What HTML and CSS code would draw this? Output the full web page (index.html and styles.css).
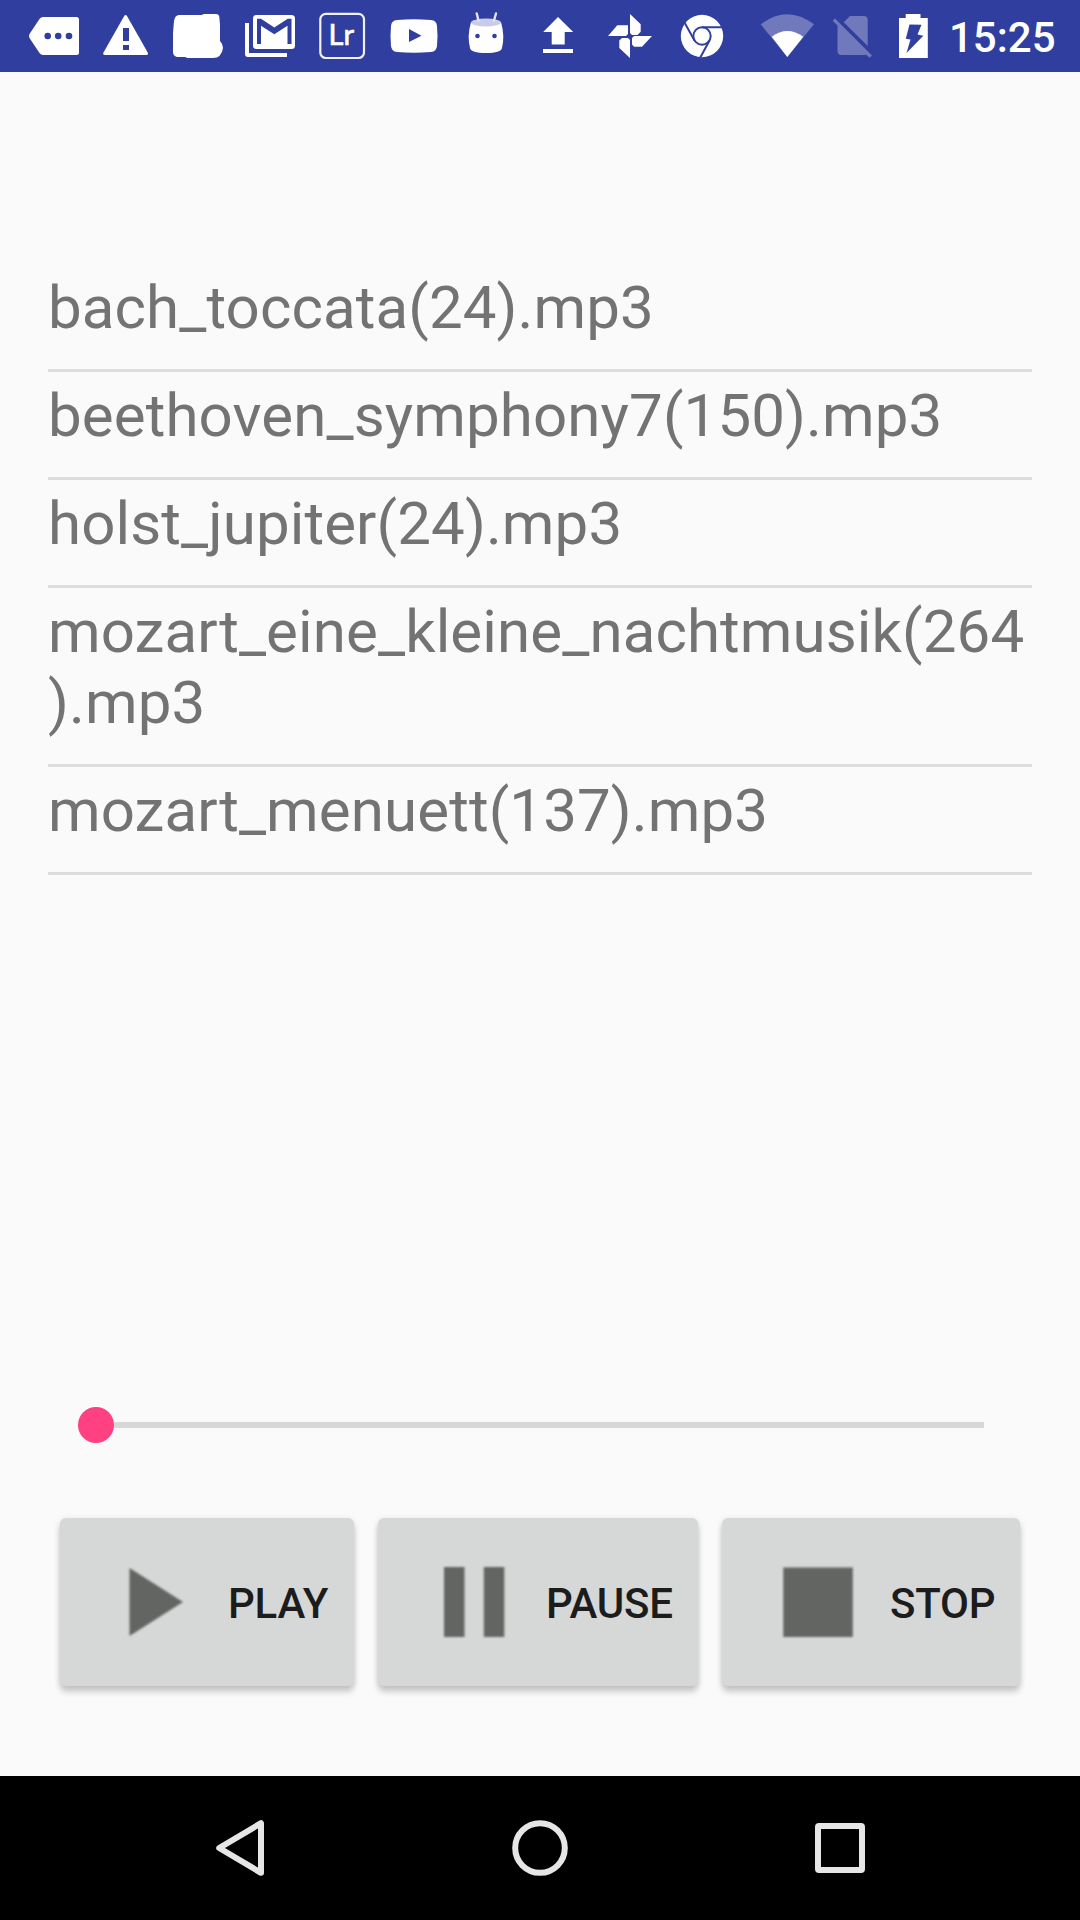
FILE: index.html
```html
<!DOCTYPE html>
<html lang="en">
<head>
<meta charset="utf-8">
<title>Music player</title>
<link rel="stylesheet" href="styles.css">
</head>
<body>
<div class="screen">
  <header class="status-bar">
    <div class="notifications">
      <svg class="icon" viewBox="18 0 72 72"><path d="M43 17H76.500q2.500 0 2.500 2.500v33q0 2.500-2.500 2.500H43q-2 0-3.500-2L29.500 38q-1-2 0-4L39.500 19q1.500-2 3.500-2z"/><g class="cut"><circle cx="47.700" cy="36" r="3.300"/><circle cx="58.200" cy="36" r="3.300"/><circle cx="69" cy="36" r="3.300"/></g></svg>
      <svg class="icon" viewBox="90 0 72 72"><path d="M124.200 16q1.400-1.800 2.800 0L147.700 52.500q1 2.500-1.500 2.500H105q-2.500 0-1.500-2.500z"/><path class="cut" d="M123 28h6v13h-6zM123 45h6v5h-6z"/></svg>
      <svg class="icon" viewBox="162 0 72 72"><path d="M179 15h22.500q2-1 3-1H216q3 0 3.300 3l.7 8v16q3 3 3 7-1.500 10-10 10H187q-1-1-2-1h-8q-4-1-4-5V33l1-12q1-6 5-6z"/></svg>
      <svg class="icon" viewBox="234 0 72 72"><path d="M245 23h4v30h38v4h-39q-3 0-3-3z"/><rect x="253" y="15" width="42" height="34" rx="3.500"/><path class="cut" d="M257 18.700h4l13.300 8.800 13.400-8.800h3.800V44h-4V25.800l-13.200 8.400L261 25.800V44h-4z"/></svg>
      <svg class="icon" viewBox="306 0 72 72"><rect class="frame" x="320.300" y="13.800" width="43.700" height="44.200" rx="5.500"/><text class="frame-label" x="328.500" y="45.200">Lr</text></svg>
      <svg class="icon" viewBox="378 0 72 72"><path d="M397 20q17-1.500 34 0 5.500.5 6 6 1 10 0 20-.5 5.500-6 6-17 1.300-34 0-5.500-.5-6-6-1-10 0-20 .5-5.500 6-6z"/><path class="cut" d="M409 29l12.500 6.700L409 42z"/></svg>
      <svg class="icon" viewBox="450 0 72 72"><path d="M471 22h30q4 14 1 26-1 5-16 5t-16-5q-3-12 1-26z"/><ellipse class="lid" cx="486" cy="22.500" rx="15" ry="4"/><path class="antenna" d="M476.700 13.500l1.800 7M496 13.500l-2 7"/><g class="cut"><circle cx="477.500" cy="36" r="2.300"/><circle cx="494.500" cy="36" r="2.300"/></g></svg>
      <svg class="icon" viewBox="522 0 72 72"><path d="M558 17l15.200 15h-8.500v12.500h-13V32h-8.500zM543 49h30v4h-30z"/></svg>
      <svg class="icon" viewBox="594 0 72 72"><path d="M630 14l10.700 10.300v7.500L637.500 35H632l-2-2zM608 36l9.300-10.700H628V34l-2 2zM652 36l-10 10.700h-8l-2-2.200V38l2-2zM630 58l-10.700-10v-7.500l2.700-2.500h6l2 2z"/></svg>
      <svg class="icon" viewBox="666 0 72 72"><circle cx="702" cy="36" r="21.200"/><g class="cut-line"><circle cx="702" cy="36" r="8.700"/><path d="M702 27.300h21M709.500 40.500L700.300 57.500M694.500 40.500L684.500 22.500"/></g></svg>
    </div>
    <div class="system">
      <svg class="icon wifi" viewBox="757 0 60 72"><path class="dim" d="M760.700 24.300Q787.300 4 814 24.300L787.300 57z"/><path d="M771.700 36.700q15.600-11.400 31.600 0L787.300 57z"/></svg>
      <svg class="icon sim" viewBox="829 0 47 72"><path class="dim" d="M835 18.500l37 37-2.500 2.300L866 54.500q-1 .5-2 .5h-22.500q-4 0-4-4V25.500l-4.800-4.800zM843.700 22.300l6.300-6.300h13.700q4 0 4 4v26z"/></svg>
      <svg class="icon battery" viewBox="893 0 41 72"><path d="M905.700 14h14.800v4h7.300v40H899V18h6.700z"/><path class="cut" d="M909.500 24.500l12 .3-4 9.700 5.800 1.200L906.500 53l4-13.500-4.700-.7z"/></svg>
      <time class="clock">15:25</time>
    </div>
  </header>

  <main class="player">
    <ul class="tracks">
      <li class="track">bach_toccata(24).mp3</li>
      <li class="track">beethoven_symphony7(150).mp3</li>
      <li class="track">holst_jupiter(24).mp3</li>
      <li class="track">mozart_eine_kleine_nachtmusik(264).mp3</li>
      <li class="track">mozart_menuett(137).mp3</li>
    </ul>
    <div class="seek"><span class="thumb"></span><span class="rail"></span></div>
    <div class="controls">
      <button class="control play"><svg class="glyph" viewBox="0 0 168 168"><path d="M69.500 50L123 84 69.500 118z"/></svg><span class="label">PLAY</span></button>
      <button class="control pause"><svg class="glyph" viewBox="0 0 168 168"><path d="M66 49h20.500v70H66zM105.800 49h20.500v70h-20.500z"/></svg><span class="label">PAUSE</span></button>
      <button class="control stop"><svg class="glyph" viewBox="0 0 168 168"><path d="M61.300 49.500h69.500V119H61.300z"/></svg><span class="label">STOP</span></button>
    </div>
  </main>

  <nav class="nav-bar">
    <svg class="nav-icon" viewBox="0 0 72 72"><path d="M57 11.200v49.600L15.200 36z"/></svg>
    <svg class="nav-icon" viewBox="0 0 72 72"><circle cx="36" cy="36" r="24.800"/></svg>
    <svg class="nav-icon" viewBox="0 0 72 72"><rect x="14" y="14" width="44" height="44" rx="1"/></svg>
  </nav>
</div>
</body>
</html>
```
FILE: styles.css
```css
* {
  box-sizing: border-box;
}

body {
  margin: 0;
  font-family: Roboto, "Liberation Sans", sans-serif;
}

.screen {
  display: flex;
  flex-direction: column;
  width: 1080px;
  height: 1920px;
  background: #fafafa;
}

.status-bar {
  display: flex;
  justify-content: space-between;
  height: 72px;
  padding-left: 18px;
  background: #303f9f;
}

.notifications,
.system {
  display: flex;
}

.icon {
  width: 72px;
  height: 72px;
  fill: #fff;
}

.cut {
  fill: #303f9f;
}

.cut-line {
  fill: none;
  stroke: #303f9f;
  stroke-width: 2;
}

.frame {
  fill: none;
  stroke: #f0f1f9;
  stroke-width: 2.2;
}

.frame-label {
  font: 400 29px Lato, sans-serif;
  stroke: #fff;
  stroke-width: 0.7;
}

.lid {
  fill: #c8cce6;
}

.antenna {
  stroke: #e3e5f3;
  stroke-width: 2.4;
  stroke-linecap: round;
}

.dim {
  fill: #7079bc;
}

.wifi {
  width: 60px;
}

.sim {
  width: 47px;
  margin-left: 12px;
}

.battery {
  width: 41px;
  margin-left: 17px;
}

.clock {
  width: 146px;
  padding-left: 15px;
  color: #fff;
  font-size: 42px;
  font-weight: 500;
  line-height: 76px;
}

.player {
  display: flex;
  flex: 1;
  flex-direction: column;
  padding: 192px 48px 0;
}

.tracks {
  height: 1125px;
  margin: 0;
  padding: 0;
  list-style: none;
}

.track {
  padding: 8px 0 26px;
  border-bottom: 3px solid #dcdcdc;
  color: #737373;
  font-size: 60px;
  letter-spacing: 0.12px;
  line-height: 71px;
  overflow-wrap: anywhere;
}

.seek {
  display: flex;
  align-items: center;
  height: 72px;
  padding: 0 48px 0 30px;
}

.thumb {
  width: 36px;
  height: 36px;
  border-radius: 50%;
  background: #ff4081;
}

.rail {
  flex: 1;
  height: 6px;
  background: #d7d7d7;
}

.controls {
  display: flex;
  gap: 24px;
  padding: 57px 12px 0;
}

.control {
  display: flex;
  align-items: center;
  height: 168px;
  padding: 0;
  border: 0;
  border-radius: 6px;
  background: #d6d8d7;
  box-shadow: 0 6px 6px rgba(0, 0, 0, 0.18), 0 1px 6px rgba(0, 0, 0, 0.1);
  color: #1c1c1c;
  font: 500 42px Roboto, "Liberation Sans", sans-serif;
  letter-spacing: -0.2px;
}

.label {
  padding-top: 2px;
}

.play {
  width: 294px;
}

.pause {
  width: 320px;
}

.stop {
  width: 298px;
}

.glyph {
  flex: none;
  width: 168px;
  height: 168px;
  fill: #636563;
  filter: blur(0.8px);
}

.nav-bar {
  display: flex;
  justify-content: center;
  align-items: center;
  gap: 228px;
  height: 144px;
  background: #000;
}

.nav-icon {
  width: 72px;
  height: 72px;
  fill: none;
  stroke: #e6e6e6;
  stroke-width: 6;
  stroke-linejoin: round;
}
```
